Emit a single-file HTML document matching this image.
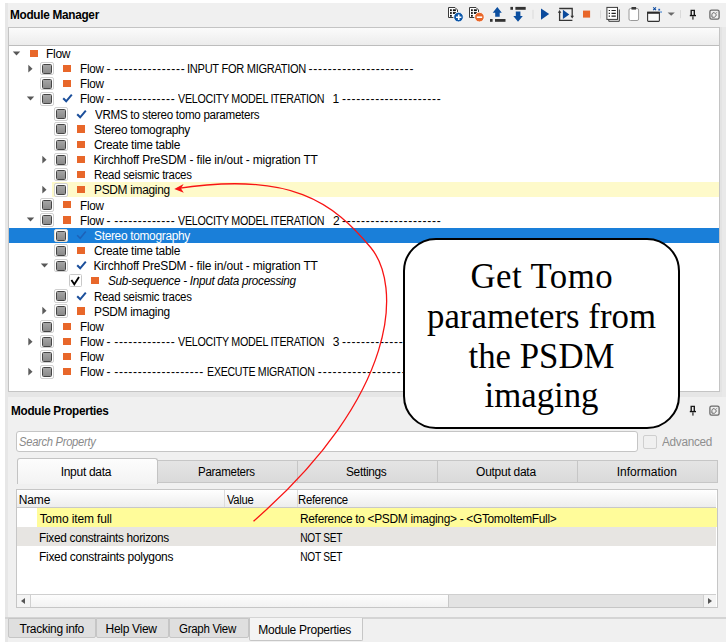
<!DOCTYPE html>
<html><head><meta charset="utf-8"><style>
*{margin:0;padding:0;box-sizing:border-box}
html,body{width:726px;height:642px;overflow:hidden;background:#fff;font-family:"Liberation Sans",sans-serif;color:#000}
.abs,.tx,i,.ck,.hl,.selbar{position:absolute;display:block}
.tx{white-space:pre;color:#000}
.hl{left:51.5px;width:667.5px;height:15.17px;background:#fefaca}
.selbar{left:9px;width:710px;height:15.17px;background:#1a7fd9}
.adown{width:0;height:0;border-left:3.9px solid transparent;border-right:3.9px solid transparent;border-top:4.2px solid #5a5a5a}
.aright{width:0;height:0;border-top:3.9px solid transparent;border-bottom:3.9px solid transparent;border-left:4.2px solid #5f5f5f}
.cb{width:13.5px;height:13.5px;border:1px solid #d0d0d0;border-radius:2px;background:#fff}
.cb.s{border-color:#e6dccf}
.cb b{position:absolute;left:1px;top:1px;width:10px;height:10px;border:1px solid #454545;border-radius:1.5px;background:linear-gradient(#a5a5a5,#8a8a8a)}
.cbc{width:13px;height:12.6px;border:1px solid #c8c8c8;border-radius:1.5px;background:#fff}
.cbc svg{position:absolute;left:-1px;top:-1px}
.sq{width:7.5px;height:7.3px;background:#e8672a}
.tab{position:absolute;top:460px;height:23px;background:linear-gradient(#e4e4e4,#dadada);border:1px solid #c6c6c6}
.tab.sel{top:458px;height:25.5px;background:linear-gradient(#fdfdfd,#f3f3f3);border-color:#c3c3c3;border-bottom:none;border-radius:3px 3px 0 0}
#tbl{position:absolute;left:16px;top:489px;width:701.8px;height:119px;background:#fff;border:1px solid #c6c6c6;overflow:hidden}
#thdr{position:absolute;left:0;top:0;width:699px;height:18px;background:linear-gradient(#fff,#ededed);border-bottom:1px solid #c8c8c8}
#thdr i{position:absolute;top:0;width:1px;height:17px;background:#dcdcdc}
.trow{position:absolute;left:0;width:699px;height:19px}
#hsb{position:absolute;left:0;top:104px;width:699px;height:14px;background:#e3e3e3;border-top:1px solid #cfcfcf}
#hsbl{position:absolute;left:0;top:0;width:13.5px;height:13px;background:#f4f4f4;border-right:1px solid #d0d0d0}
#hsbl:after{content:"";position:absolute;left:3.5px;top:2.6px;border-top:3.7px solid transparent;border-bottom:3.7px solid transparent;border-right:4.2px solid #555}
#hsbh{position:absolute;left:13.5px;top:0;width:418px;height:13px;background:linear-gradient(#fdfdfd,#f1f1f1);border-right:1px solid #c8c8c8}
#hsbr{position:absolute;right:0;top:0;width:13.5px;height:13px;background:#f4f4f4;border-left:1px solid #d0d0d0}
#hsbr:after{content:"";position:absolute;left:4.5px;top:2.6px;border-top:3.7px solid transparent;border-bottom:3.7px solid transparent;border-left:4.2px solid #555}
.btab{position:absolute;top:617.5px;height:20.5px;background:#dfdfdf;border:1px solid #c6c6c6;border-radius:0 0 2px 2px}
.btab.bsel{top:617.5px;height:23px;background:#f4f4f4;border-top:none;border-radius:0 0 2px 2px}
#callout{position:absolute;left:403px;top:237.8px;width:277px;height:191.4px;border:2.2px solid #000;border-radius:33px;background:#fff}
#callout div{position:absolute;left:0;width:100%;text-align:center;font-family:"Liberation Serif",serif;font-size:34.8px;line-height:40px;white-space:pre}
</style></head>
<body>
<div class="abs" style="left:5px;top:3px;width:721px;height:639px;background:#f0f0f0"></div>
<div class="abs" style="left:5px;top:3px;width:3px;height:639px;background:#e7e7e7"></div>
<div class="abs" style="left:720px;top:27px;width:6px;height:370px;background:#e9e9e9"></div>
<div class="abs" style="left:720px;top:27px;width:2px;height:370px;background:#e3e3e3"></div>
<div class="abs" style="left:8px;top:391.5px;width:714px;height:5.5px;background:#e6e6e6"></div>
<span class="tx" style="left:10.15px;top:4.74px;font-size:12px;line-height:20px;letter-spacing:-0.300px;transform:scaleX(0.9827);transform-origin:0.75px 0;font-weight:bold">Module Manager</span>

<svg class="abs" style="left:0;top:0" width="726" height="27" viewBox="0 0 726 27">
 <!-- add doc -->
 <g transform="translate(448,7)">
  <path d="M0.5 0.5 H7 L9.5 3 V10.5 H0.5 Z" fill="#fff" stroke="#3a3a3a" stroke-width="1"/>
  <rect x="2" y="2.3" width="1.8" height="1.8" fill="#111"/><rect x="4.9" y="2.3" width="3" height="1.8" fill="#111"/>
  <rect x="2" y="5.1" width="1.8" height="1.8" fill="#111"/><rect x="4.9" y="5.1" width="3" height="1.8" fill="#111"/>
  <rect x="2" y="7.9" width="1.8" height="1.8" fill="#111"/>
 </g>
 <circle cx="458.5" cy="17.1" r="4.8" fill="#0c56a8" stroke="#fff" stroke-width="0.8"/>
 <path d="M456 17.2 H461.4 M458.7 14.5 V19.9" stroke="#fff" stroke-width="1.6"/>
 <!-- remove doc -->
 <g transform="translate(469,7)">
  <path d="M0.5 0.5 H7 L9.5 3 V10.5 H0.5 Z" fill="#fff" stroke="#3a3a3a" stroke-width="1"/>
  <rect x="2" y="2.3" width="1.8" height="1.8" fill="#111"/><rect x="4.9" y="2.3" width="3" height="1.8" fill="#111"/>
  <rect x="2" y="5.1" width="1.8" height="1.8" fill="#111"/><rect x="4.9" y="5.1" width="3" height="1.8" fill="#111"/>
  <rect x="2" y="7.9" width="1.8" height="1.8" fill="#111"/>
 </g>
 <circle cx="479.4" cy="17.1" r="4.8" fill="#e8672a" stroke="#fff" stroke-width="0.8"/>
 <path d="M476.8 17.2 H482.2" stroke="#fff" stroke-width="1.6"/>
 <!-- move up -->
 <path d="M497.3 6.9 L501.8 12.7 H499.7 V16.8 H495.2 V12.7 H492.7 Z" fill="#0c4fa0"/>
 <rect x="490" y="19" width="2.6" height="2.8" fill="#333"/><rect x="495" y="19" width="10.5" height="2.8" fill="#333"/>
 <!-- move down -->
 <rect x="510.4" y="6.9" width="2.6" height="2.9" fill="#333"/><rect x="515.4" y="6.9" width="10.3" height="2.9" fill="#333"/>
 <path d="M518 21.8 L522.8 16 H520.4 V11.4 H515.8 V16 H513.3 Z" fill="#0c4fa0"/>
 <rect x="532.5" y="9.8" width="1" height="9" fill="#dadada"/>
 <!-- play -->
 <path d="M541 8.5 L549.2 14.1 L541 19.7 Z" fill="#0b4a9c"/>
 <!-- run loop -->
 <path d="M559.6 12 V20.4 H572.4 M559.2 8.5 H572.2 V16.2" fill="none" stroke="#353535" stroke-width="1.3"/>
 <path d="M557.8 12.8 L559.6 10 L561.4 12.8 Z M570.4 15.8 L572.2 18.4 L574 15.8 Z" fill="#353535"/>
 <path d="M562.9 9.8 L569.3 14.4 L562.9 19 Z" fill="#0b4a9c"/>
 <!-- stop -->
 <rect x="583" y="10.6" width="7.1" height="7" fill="#e8672a"/>
 <rect x="600" y="10.3" width="1" height="8.2" fill="#dadada"/>
 <!-- list pages -->
 <path d="M608.8 9.5 V21.3 H619.3 V9.5" fill="none" stroke="#3a3a3a" stroke-width="1"/>
 <rect x="606.9" y="7.4" width="10.6" height="12" fill="#fff" stroke="#3a3a3a" stroke-width="1"/>
 <path d="M608.7 10.5 h1.3 M611.5 10.5 h4.3 M608.7 13.3 h1.3 M611.5 13.3 h4.3 M608.7 16.1 h1.3 M611.5 16.1 h4.3" stroke="#222" stroke-width="1.15"/>
 <!-- clipboard -->
 <rect x="629" y="8.5" width="9.6" height="12" rx="1.5" fill="#fff" stroke="#9a9a9a" stroke-width="1"/>
 <rect x="631.5" y="7" width="4.6" height="2.6" fill="#3a3a3a"/>
 <!-- window -->
 <rect x="647.6" y="12.6" width="11.8" height="8.8" rx="0.8" fill="#f9f9f9" stroke="#333" stroke-width="1.1"/>
 <rect x="647.1" y="11.6" width="12.7" height="2.1" fill="#2a2a2a"/>
 <path d="M653.2 7.4 L656 10.2 M656 7.4 L653.2 10.2" stroke="#0b4aa0" stroke-width="1.1"/><rect x="658.3" y="8.8" width="1.8" height="1.8" fill="#2a62b8"/><rect x="660.3" y="11.3" width="1.5" height="1.5" fill="#4a86cf"/>
 <path d="M667.6 12.5 H674.8 L671.2 15.8 Z" fill="#6a6a6a"/>
 <rect x="680" y="10.1" width="1" height="8.1" fill="#dadada"/>
 <!-- pin -->
 <path d="M691.2 15.2 V10.4 H694.3 V15.2" fill="none" stroke="#1a1a1a" stroke-width="1.4"/>
 <rect x="689.8" y="14.9" width="6.2" height="1.35" fill="#111"/>
 <rect x="692.1" y="16.2" width="1.6" height="3.4" fill="#555"/>
 <!-- float -->
 <rect x="709.9" y="10.1" width="9.2" height="9" rx="1.6" fill="none" stroke="#6a6a6a" stroke-width="1.3"/>
 <path d="M711.9 17.1 V14.6 Q711.9 13.2 713.2 12.8 L714.2 12.5 L716.4 14.9 L715.6 16.3 Q714.9 17.3 713.8 17.3 Z" fill="none" stroke="#6a6a6a" stroke-width="1"/>
 <path d="M715.2 13.6 L717.3 12.2" stroke="#8a8a8a" stroke-width="0.9"/>
</svg>

<div class="abs" style="left:8px;top:27px;width:712px;height:365px;background:#fff;border:1px solid #c4c4c4;overflow:hidden">
 <div class="abs" style="left:0;top:0;width:710px;height:18px;background:linear-gradient(#fbfbfb,#ececec);border-bottom:1px solid #bdbdbd"></div>
</div>
<svg class="ck" style="left:11.50px;top:45.50px" width="10" height="16"><path d="M0.8 5.5 H8.2 L4.5 9.6 Z" fill="#575757"/></svg>
<i class="sq" style="left:30.0px;top:49.50px"></i>
<span class="tx" style="left:46.10px;top:43.84px;font-size:12px;line-height:20px;letter-spacing:-0.300px">Flow</span>
<svg class="ck" style="left:25.50px;top:60.67px" width="10" height="16"><path d="M2.3 3.8 V11.6 L6.5 7.7 Z" fill="#5c5c5c"/></svg>
<i class="cb" style="left:40.0px;top:61.67px"><b></b></i>
<i class="sq" style="left:63.0px;top:64.67px"></i>
<span class="tx" style="left:79.80px;top:59.01px;font-size:12px;line-height:20px;letter-spacing:-0.300px;transform:scaleX(0.9746);transform-origin:1.00px 0">Flow</span>
<span class="tx" style="left:106.40px;top:59.01px;font-size:12px;line-height:20px;letter-spacing:0.000px">-</span>
<span class="tx" style="left:114.20px;top:59.01px;font-size:12px;line-height:20px;letter-spacing:0.750px">---------------</span>
<span class="tx" style="left:186.90px;top:59.01px;font-size:12px;line-height:20px;letter-spacing:-0.300px;transform:scaleX(0.9208);transform-origin:1.00px 0">INPUT FOR MIGRATION</span>
<span class="tx" style="left:308.50px;top:59.01px;font-size:12px;line-height:20px;letter-spacing:0.810px">----------------------</span>
<i class="cb" style="left:40.0px;top:76.84px"><b></b></i>
<i class="sq" style="left:63.0px;top:79.84px"></i>
<span class="tx" style="left:79.80px;top:74.18px;font-size:12px;line-height:20px;letter-spacing:-0.300px;transform:scaleX(0.9746);transform-origin:1.00px 0">Flow</span>
<svg class="ck" style="left:25.50px;top:91.01px" width="10" height="16"><path d="M0.8 5.5 H8.2 L4.5 9.6 Z" fill="#575757"/></svg>
<i class="cb" style="left:40.0px;top:92.01px"><b></b></i>
<svg class="ck" style="left:62.0px;top:93.41px" width="11" height="11" viewBox="0 0 11 11"><path d="M1.2 5.2 L4.2 8.3 L9.8 1.6" fill="none" stroke="#1b4f9b" stroke-width="2"/></svg>
<span class="tx" style="left:79.80px;top:89.35px;font-size:12px;line-height:20px;letter-spacing:-0.300px;transform:scaleX(0.9746);transform-origin:1.00px 0">Flow</span>
<span class="tx" style="left:106.40px;top:89.35px;font-size:12px;line-height:20px;letter-spacing:0.000px">-</span>
<span class="tx" style="left:114.20px;top:89.35px;font-size:12px;line-height:20px;letter-spacing:0.717px">-------------</span>
<span class="tx" style="left:178.00px;top:89.35px;font-size:12px;line-height:20px;letter-spacing:-0.300px;transform:scaleX(0.8926);transform-origin:0.00px 0">VELOCITY MODEL ITERATION</span>
<span class="tx" style="left:332.50px;top:89.35px;font-size:12px;line-height:20px;letter-spacing:0.000px">1</span>
<span class="tx" style="left:342.00px;top:89.35px;font-size:12px;line-height:20px;letter-spacing:0.740px">---------------------</span>
<i class="cb" style="left:54.0px;top:107.18px"><b></b></i>
<svg class="ck" style="left:76.0px;top:108.58px" width="11" height="11" viewBox="0 0 11 11"><path d="M1.2 5.2 L4.2 8.3 L9.8 1.6" fill="none" stroke="#1b4f9b" stroke-width="2"/></svg>
<span class="tx" style="left:94.70px;top:104.52px;font-size:12px;line-height:20px;letter-spacing:-0.300px;transform:scaleX(0.9679);transform-origin:0.00px 0">VRMS to stereo tomo parameters</span>
<i class="cb" style="left:54.0px;top:122.35px"><b></b></i>
<i class="sq" style="left:77.0px;top:125.35px"></i>
<span class="tx" style="left:94.00px;top:119.69px;font-size:12px;line-height:20px;letter-spacing:-0.300px;transform:scaleX(0.9897);transform-origin:0.50px 0">Stereo tomography</span>
<i class="cb" style="left:54.0px;top:137.52px"><b></b></i>
<i class="sq" style="left:77.0px;top:140.52px"></i>
<span class="tx" style="left:94.00px;top:134.86px;font-size:12px;line-height:20px;letter-spacing:-0.300px;transform:scaleX(0.9965);transform-origin:0.50px 0">Create time table</span>
<svg class="ck" style="left:39.50px;top:151.69px" width="10" height="16"><path d="M2.3 3.8 V11.6 L6.5 7.7 Z" fill="#5c5c5c"/></svg>
<i class="cb" style="left:54.0px;top:152.69px"><b></b></i>
<i class="sq" style="left:77.0px;top:155.69px"></i>
<span class="tx" style="left:93.50px;top:150.03px;font-size:12px;line-height:20px;letter-spacing:-0.180px">Kirchhoff PreSDM - file in/out - migration TT</span>
<i class="cb" style="left:54.0px;top:167.86px"><b></b></i>
<i class="sq" style="left:77.0px;top:170.86px"></i>
<span class="tx" style="left:93.50px;top:165.20px;font-size:12px;line-height:20px;letter-spacing:-0.300px;transform:scaleX(0.9535);transform-origin:1.00px 0">Read seismic traces</span>
<div class="hl" style="top:182.03px"></div>
<svg class="ck" style="left:39.50px;top:182.03px" width="10" height="16"><path d="M2.3 3.8 V11.6 L6.5 7.7 Z" fill="#5c5c5c"/></svg>
<i class="cb" style="left:54.0px;top:183.03px"><b></b></i>
<i class="sq" style="left:77.0px;top:186.03px"></i>
<span class="tx" style="left:93.50px;top:180.37px;font-size:12px;line-height:20px;letter-spacing:-0.300px;transform:scaleX(0.9913);transform-origin:1.00px 0">PSDM imaging</span>
<i class="cb" style="left:40.0px;top:198.20px"><b></b></i>
<i class="sq" style="left:63.0px;top:201.20px"></i>
<span class="tx" style="left:79.80px;top:195.54px;font-size:12px;line-height:20px;letter-spacing:-0.300px;transform:scaleX(0.9746);transform-origin:1.00px 0">Flow</span>
<svg class="ck" style="left:25.50px;top:212.37px" width="10" height="16"><path d="M0.8 5.5 H8.2 L4.5 9.6 Z" fill="#575757"/></svg>
<i class="cb" style="left:40.0px;top:213.37px"><b></b></i>
<i class="sq" style="left:63.0px;top:216.37px"></i>
<span class="tx" style="left:79.80px;top:210.71px;font-size:12px;line-height:20px;letter-spacing:-0.300px;transform:scaleX(0.9746);transform-origin:1.00px 0">Flow</span>
<span class="tx" style="left:106.40px;top:210.71px;font-size:12px;line-height:20px;letter-spacing:0.000px">-</span>
<span class="tx" style="left:114.20px;top:210.71px;font-size:12px;line-height:20px;letter-spacing:0.717px">-------------</span>
<span class="tx" style="left:178.00px;top:210.71px;font-size:12px;line-height:20px;letter-spacing:-0.300px;transform:scaleX(0.8926);transform-origin:0.00px 0">VELOCITY MODEL ITERATION</span>
<span class="tx" style="left:333.00px;top:210.71px;font-size:12px;line-height:20px;letter-spacing:0.000px">2</span>
<span class="tx" style="left:342.00px;top:210.71px;font-size:12px;line-height:20px;letter-spacing:0.740px">---------------------</span>
<div class="selbar" style="top:227.54px"></div>
<i class="cb s" style="left:54.0px;top:228.54px"><b></b></i>
<svg class="ck" style="left:76.0px;top:229.94px" width="11" height="11" viewBox="0 0 11 11"><path d="M1.2 5.2 L4.2 8.3 L9.8 1.6" fill="none" stroke="#1d62b8" stroke-width="1.5"/></svg>
<span class="tx" style="left:94.00px;top:225.88px;font-size:12px;line-height:20px;letter-spacing:-0.300px;transform:scaleX(0.9897);transform-origin:0.50px 0;color:#fff">Stereo tomography</span>
<i class="cb" style="left:54.0px;top:243.71px"><b></b></i>
<i class="sq" style="left:77.0px;top:246.71px"></i>
<span class="tx" style="left:94.00px;top:241.05px;font-size:12px;line-height:20px;letter-spacing:-0.300px;transform:scaleX(0.9965);transform-origin:0.50px 0">Create time table</span>
<svg class="ck" style="left:39.50px;top:257.88px" width="10" height="16"><path d="M0.8 5.5 H8.2 L4.5 9.6 Z" fill="#575757"/></svg>
<i class="cb" style="left:54.0px;top:258.88px"><b></b></i>
<svg class="ck" style="left:76.0px;top:260.28px" width="11" height="11" viewBox="0 0 11 11"><path d="M1.2 5.2 L4.2 8.3 L9.8 1.6" fill="none" stroke="#1b4f9b" stroke-width="2"/></svg>
<span class="tx" style="left:93.50px;top:256.22px;font-size:12px;line-height:20px;letter-spacing:-0.180px">Kirchhoff PreSDM - file in/out - migration TT</span>
<i class="cbc" style="left:68.7px;top:274.25px"><svg width="14" height="14" viewBox="0 0 14 14"><path d="M2.4 5.9 L5.3 10.3 L10 2.9" fill="none" stroke="#000" stroke-width="1.8"/></svg></i>
<i class="sq" style="left:91.0px;top:277.05px"></i>
<span class="tx" style="left:108.25px;top:271.39px;font-size:12px;line-height:20px;letter-spacing:-0.300px;transform:scaleX(0.9781);transform-origin:0.25px 0;font-style:italic">Sub-sequence - Input data processing</span>
<i class="cb" style="left:54.0px;top:289.22px"><b></b></i>
<svg class="ck" style="left:76.0px;top:290.62px" width="11" height="11" viewBox="0 0 11 11"><path d="M1.2 5.2 L4.2 8.3 L9.8 1.6" fill="none" stroke="#1b4f9b" stroke-width="2"/></svg>
<span class="tx" style="left:93.50px;top:286.56px;font-size:12px;line-height:20px;letter-spacing:-0.300px;transform:scaleX(0.9535);transform-origin:1.00px 0">Read seismic traces</span>
<svg class="ck" style="left:39.50px;top:303.39px" width="10" height="16"><path d="M2.3 3.8 V11.6 L6.5 7.7 Z" fill="#5c5c5c"/></svg>
<i class="cb" style="left:54.0px;top:304.39px"><b></b></i>
<i class="sq" style="left:77.0px;top:307.39px"></i>
<span class="tx" style="left:93.50px;top:301.73px;font-size:12px;line-height:20px;letter-spacing:-0.300px;transform:scaleX(0.9913);transform-origin:1.00px 0">PSDM imaging</span>
<i class="cb" style="left:40.0px;top:319.56px"><b></b></i>
<i class="sq" style="left:63.0px;top:322.56px"></i>
<span class="tx" style="left:79.80px;top:316.90px;font-size:12px;line-height:20px;letter-spacing:-0.300px;transform:scaleX(0.9746);transform-origin:1.00px 0">Flow</span>
<svg class="ck" style="left:25.50px;top:333.73px" width="10" height="16"><path d="M2.3 3.8 V11.6 L6.5 7.7 Z" fill="#5c5c5c"/></svg>
<i class="cb" style="left:40.0px;top:334.73px"><b></b></i>
<i class="sq" style="left:63.0px;top:337.73px"></i>
<span class="tx" style="left:79.80px;top:332.07px;font-size:12px;line-height:20px;letter-spacing:-0.300px;transform:scaleX(0.9746);transform-origin:1.00px 0">Flow</span>
<span class="tx" style="left:106.40px;top:332.07px;font-size:12px;line-height:20px;letter-spacing:0.000px">-</span>
<span class="tx" style="left:114.20px;top:332.07px;font-size:12px;line-height:20px;letter-spacing:0.717px">-------------</span>
<span class="tx" style="left:178.00px;top:332.07px;font-size:12px;line-height:20px;letter-spacing:-0.300px;transform:scaleX(0.8926);transform-origin:0.00px 0">VELOCITY MODEL ITERATION</span>
<span class="tx" style="left:332.80px;top:332.07px;font-size:12px;line-height:20px;letter-spacing:0.000px">3</span>
<span class="tx" style="left:342.00px;top:332.07px;font-size:12px;line-height:20px;letter-spacing:0.740px">---------------------</span>
<i class="cb" style="left:40.0px;top:349.90px"><b></b></i>
<i class="sq" style="left:63.0px;top:352.90px"></i>
<span class="tx" style="left:79.80px;top:347.24px;font-size:12px;line-height:20px;letter-spacing:-0.300px;transform:scaleX(0.9746);transform-origin:1.00px 0">Flow</span>
<svg class="ck" style="left:25.50px;top:364.07px" width="10" height="16"><path d="M2.3 3.8 V11.6 L6.5 7.7 Z" fill="#5c5c5c"/></svg>
<i class="cb" style="left:40.0px;top:365.07px"><b></b></i>
<i class="sq" style="left:63.0px;top:368.07px"></i>
<span class="tx" style="left:79.80px;top:362.41px;font-size:12px;line-height:20px;letter-spacing:-0.300px;transform:scaleX(0.9746);transform-origin:1.00px 0">Flow</span>
<span class="tx" style="left:106.40px;top:362.41px;font-size:12px;line-height:20px;letter-spacing:0.000px">-</span>
<span class="tx" style="left:114.20px;top:362.41px;font-size:12px;line-height:20px;letter-spacing:0.728px">-------------------</span>
<span class="tx" style="left:206.80px;top:362.41px;font-size:12px;line-height:20px;letter-spacing:-0.300px;transform:scaleX(0.8809);transform-origin:1.00px 0">EXECUTE MIGRATION</span>
<span class="tx" style="left:317.80px;top:362.41px;font-size:12px;line-height:20px;letter-spacing:0.935px">---------------------</span>
<span class="tx" style="left:10.85px;top:401.14px;font-size:12px;line-height:20px;letter-spacing:-0.300px;transform:scaleX(0.9797);transform-origin:0.75px 0;font-weight:bold">Module Properties</span>
<svg class="abs" style="left:0;top:396px" width="726" height="30">
 <path d="M691.2 15.2 V10.4 H694.3 V15.2" fill="none" stroke="#1a1a1a" stroke-width="1.4"/>
 <rect x="689.8" y="14.9" width="6.2" height="1.35" fill="#111"/>
 <rect x="692.1" y="16.2" width="1.6" height="3.4" fill="#555"/>
 <rect x="709.9" y="10.1" width="9.2" height="9" rx="1.6" fill="none" stroke="#6a6a6a" stroke-width="1.3"/>
 <path d="M711.9 17.1 V14.6 Q711.9 13.2 713.2 12.8 L714.2 12.5 L716.4 14.9 L715.6 16.3 Q714.9 17.3 713.8 17.3 Z" fill="none" stroke="#6a6a6a" stroke-width="1"/>
 <path d="M715.2 13.6 L717.3 12.2" stroke="#8a8a8a" stroke-width="0.9"/>
</svg>
<div class="abs" style="left:16px;top:431px;width:621.5px;height:21px;background:#fff;border:1px solid #c5c5c5;border-radius:3px"></div>
<span class="tx" style="left:19.05px;top:431.84px;font-size:12px;line-height:20px;letter-spacing:-0.300px;transform:scaleX(0.9312);transform-origin:0.25px 0;font-style:italic;color:#8a8a8a">Search Property</span>
<div class="abs" style="left:642.8px;top:434.5px;width:14px;height:14px;border:1px solid #cfcfcf;border-radius:2px;background:#f0f0f0"></div>
<span class="tx" style="left:661.80px;top:432.04px;font-size:12px;line-height:20px;letter-spacing:-0.300px;transform:scaleX(0.9812);transform-origin:0.00px 0;color:#8f8f8f">Advanced</span>
<div class="tab" style="left:157px;width:141px"></div>
<div class="tab" style="left:297px;width:141px"></div>
<div class="tab" style="left:437px;width:141px"></div>
<div class="tab" style="left:577px;width:141px"></div>
<div class="tab sel" style="left:16.5px;width:141px"></div>
<span class="tx" style="left:60.70px;top:461.54px;font-size:12px;line-height:20px;letter-spacing:-0.289px">Input data</span>
<span class="tx" style="left:197.80px;top:462.44px;font-size:12px;line-height:20px;letter-spacing:-0.300px;transform:scaleX(0.9602);transform-origin:1.00px 0">Parameters</span>
<span class="tx" style="left:346.10px;top:462.44px;font-size:12px;line-height:20px;letter-spacing:-0.300px;transform:scaleX(0.9888);transform-origin:0.50px 0">Settings</span>
<span class="tx" style="left:476.10px;top:462.44px;font-size:12px;line-height:20px;letter-spacing:-0.275px">Output data</span>
<span class="tx" style="left:616.70px;top:462.44px;font-size:12px;line-height:20px;letter-spacing:0.015px">Information</span>
<div id="tbl">
 <div id="thdr"><i style="left:206.5px"></i><i style="left:279.5px"></i></div>
 <div class="trow" style="top:18px;background:#fff"><div style="position:absolute;left:19.5px;top:0;width:683px;height:19px;background:#fffc9a"></div></div>
 <div class="trow" style="top:37px;background:#e7e5e2"></div>
 <div class="trow" style="top:56px;background:#fff"></div>
 <div id="hsb"><div id="hsbl"></div><div id="hsbh"></div><div id="hsbr"></div></div>
</div>
<span class="tx" style="left:18.70px;top:490.04px;font-size:12px;line-height:20px;letter-spacing:-0.100px">Name</span>
<span class="tx" style="left:227.30px;top:490.04px;font-size:12px;line-height:20px;letter-spacing:-0.300px;transform:scaleX(0.9329);transform-origin:0.00px 0">Value</span>
<span class="tx" style="left:298.40px;top:490.04px;font-size:12px;line-height:20px;letter-spacing:-0.300px;transform:scaleX(0.9457);transform-origin:1.00px 0">Reference</span>
<span class="tx" style="left:39.65px;top:508.94px;font-size:12px;line-height:20px;letter-spacing:-0.127px">Tomo item full</span>
<span class="tx" style="left:299.80px;top:508.94px;font-size:12px;line-height:20px;letter-spacing:-0.300px;transform:scaleX(0.9913);transform-origin:1.00px 0">Reference to &lt;PSDM imaging&gt; - &lt;GTomoItemFull&gt;</span>
<span class="tx" style="left:38.90px;top:528.04px;font-size:12px;line-height:20px;letter-spacing:-0.300px;transform:scaleX(0.9877);transform-origin:1.00px 0">Fixed constraints horizons</span>
<span class="tx" style="left:299.80px;top:528.04px;font-size:12px;line-height:20px;letter-spacing:-0.300px;transform:scaleX(0.8480);transform-origin:1.00px 0">NOT SET</span>
<span class="tx" style="left:38.90px;top:547.04px;font-size:12px;line-height:20px;letter-spacing:-0.300px;transform:scaleX(0.9992);transform-origin:1.00px 0">Fixed constraints polygons</span>
<span class="tx" style="left:299.80px;top:547.04px;font-size:12px;line-height:20px;letter-spacing:-0.300px;transform:scaleX(0.8480);transform-origin:1.00px 0">NOT SET</span>
<div class="abs" style="left:5px;top:617px;width:721px;height:1.6px;background:#d4d4d4"></div>
<div class="btab" style="left:8px;width:88px"></div>
<div class="btab" style="left:95.5px;width:73.5px"></div>
<div class="btab" style="left:168.5px;width:80.5px"></div>
<div class="btab bsel" style="left:248.5px;width:114px"></div>
<span class="tx" style="left:19.55px;top:618.54px;font-size:12px;line-height:20px;letter-spacing:-0.292px">Tracking info</span>
<span class="tx" style="left:105.50px;top:618.54px;font-size:12px;line-height:20px;letter-spacing:-0.288px">Help View</span>
<span class="tx" style="left:179.20px;top:618.54px;font-size:12px;line-height:20px;letter-spacing:-0.300px;transform:scaleX(0.9578);transform-origin:0.50px 0">Graph View</span>
<span class="tx" style="left:258.30px;top:619.54px;font-size:12px;line-height:20px;letter-spacing:-0.275px">Module Properties</span>
<div id="callout">
<div style="top:17.4px ;letter-spacing:0.45px;text-indent:0.45px">Get Tomo</div>
<div style="top:57.0px">parameters from</div>
<div style="top:96.8px">the PSDM</div>
<div style="top:136.5px">imaging</div>
</div>

<svg class="abs" style="left:0;top:0" width="726" height="642" viewBox="0 0 726 642">
 <path d="M176.5 188.7 C291.1 170.8 333.5 202.8 370.7 247.5 C401.4 284.5 400.0 393.6 253.5 521.2" fill="none" stroke="#f81414" stroke-width="1.3"/>
 <path d="M174.3 189 L183.6 184 L181 188.6 L183.8 192.8 Z" fill="#f81414"/>
</svg>

</body></html>
